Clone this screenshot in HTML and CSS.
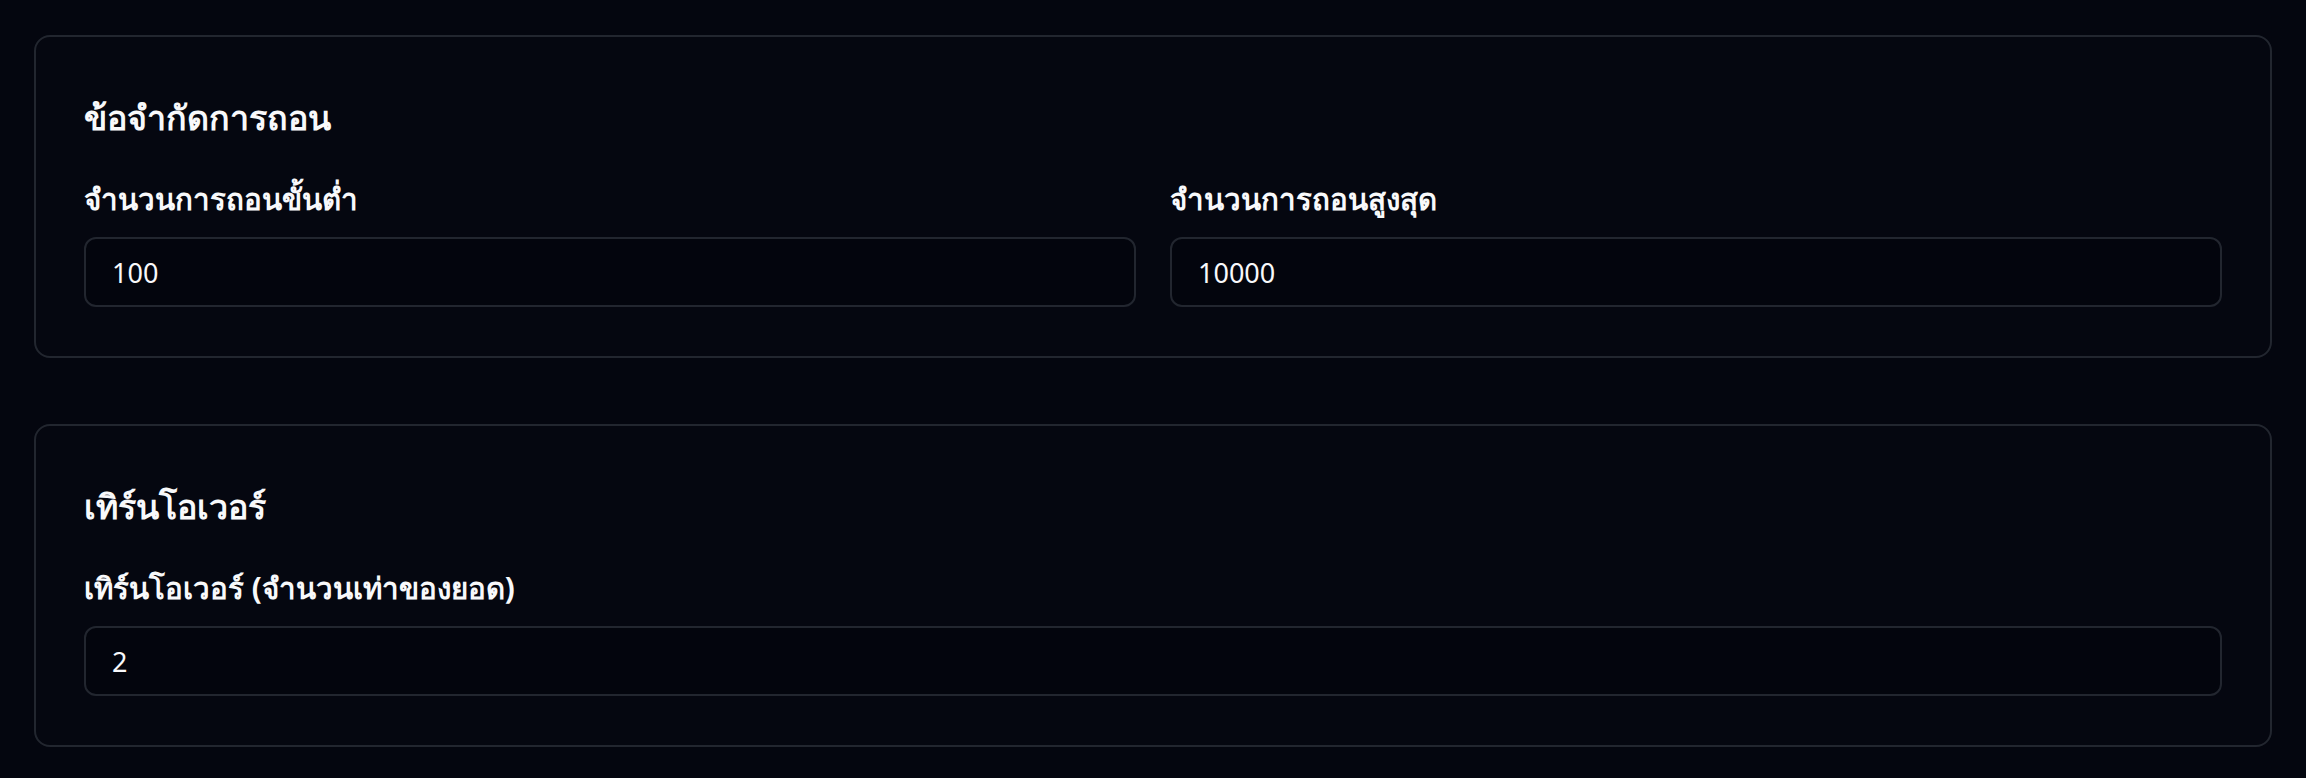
FILE: index.html
```html
<!DOCTYPE html>
<html lang="th">
<head>
    <meta charset="UTF-8">
    <meta name="viewport" content="width=device-width, initial-scale=1.0">
    <title>ตั้งค่าการถอน</title>
    <link rel="stylesheet" href="styles.css">
</head>
<body>
    <div class="page">
        <div class="card">
            <h2 class="card-title">ข้อจำกัดการถอน</h2>
            <div class="form-grid">
                <div class="form-group">
                    <label for="min-withdraw">จำนวนการถอนขั้นต่ำ</label>
                    <input type="number" id="min-withdraw" value="100">
                </div>
                <div class="form-group">
                    <label for="max-withdraw">จำนวนการถอนสูงสุด</label>
                    <input type="number" id="max-withdraw" value="10000">
                </div>
            </div>
        </div>

        <div class="card">
            <h2 class="card-title">เทิร์นโอเวอร์</h2>
            <div class="form-group">
                <label for="turnover">เทิร์นโอเวอร์ (จำนวนเท่าของยอด)</label>
                <input type="number" id="turnover" value="2">
            </div>
        </div>
    </div>
</body>
</html>
```

FILE: styles.css
```css
body {
    margin: 0;
    padding: 0;
    background-color: #04060f;
    color: #f8f9fb;
    font-family: "Noto Sans", sans-serif;
}
.page {
    padding: 35px 34px;
    display: flex;
    flex-direction: column;
    gap: 66px;
}
.card {
    border: 2px solid #22262f;
    border-radius: 16px;
    background-color: #050710;
    padding: 56px 48px 49px;
}
.card-title {
    margin: 0 0 38px;
    font-size: 34px;
    line-height: 48px;
    font-weight: 700;
}
.form-grid {
    display: grid;
    grid-template-columns: 1fr 1fr;
    gap: 34px;
}
.form-group label {
    display: block;
    font-size: 29.5px;
    line-height: 40px;
    font-weight: 700;
    margin-bottom: 18px;
}
.form-group input {
    display: block;
    width: 100%;
    height: 70px;
    box-sizing: border-box;
    padding: 0 26px;
    border: 2px solid #22262f;
    border-radius: 12px;
    background-color: #03050d;
    color: #f8f9fb;
    font-family: "Noto Sans", sans-serif;
    font-size: 27px;
    outline: none;
    -moz-appearance: textfield;
}
.form-group input::-webkit-outer-spin-button,
.form-group input::-webkit-inner-spin-button {
    -webkit-appearance: none;
    margin: 0;
}
```
